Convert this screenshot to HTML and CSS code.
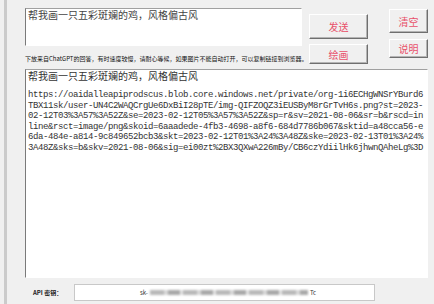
FILE: index.html
```html
<!DOCTYPE html>
<html lang="zh">

<head>
    <meta charset="UTF-8">
    <meta name="viewport" content="width=device-width, initial-scale=1.0">
    <title>ChatGPT 助手</title>
    <link rel="stylesheet" href="styles.css">
</head>

<body>
    <div class="window">
        <div class="edge"></div>
        <div class="main">
            <div class="top">
                <div class="prompt-col">
                    <div class="prompt">帮我画一只五彩斑斓的鸡，风格偏古风</div>
                    <p class="note">下放来自ChatGPT的回答，有时速度较慢，请耐心等候，如果图片不能自动打开，可以复制链接到浏览器。</p>
                </div>
                <div class="btn-col main-btns">
                    <button class="btn send">发送</button>
                    <button class="btn draw">绘画</button>
                </div>
                <div class="btn-col side-btns">
                    <button class="btn clear">清空</button>
                    <button class="btn help">说明</button>
                </div>
            </div>
            <div class="output">
                <div class="question">帮我画一只五彩斑斓的鸡，风格偏古风</div>
<pre class="answer">https://oaidalleapiprodscus.blob.core.windows.net/private/org-1i6ECHgWNSrYBurd6
TBX11sk/user-UN4C2WAQCrgUe6DxBiI28pTE/img-QIFZOQZ3iEUSByM8rGrTvH6s.png?st=2023-
02-12T03%3A57%3A52Z&amp;se=2023-02-12T05%3A57%3A52Z&amp;sp=r&amp;sv=2021-08-06&amp;sr=b&amp;rscd=in
line&amp;rsct=image/png&amp;skoid=6aaadede-4fb3-4698-a8f6-684d7786b067&amp;sktid=a48cca56-e
6da-484e-a814-9c849652bcb3&amp;skt=2023-02-12T01%3A24%3A48Z&amp;ske=2023-02-13T01%3A24%
3A48Z&amp;sks=b&amp;skv=2021-08-06&amp;sig=ei00zt%2BX3QXwA226mBy/CB6czYdiilHk6jhwnQAheLg%3D</pre>
            </div>
            <div class="key-row">
                <label class="key-label" for="apikey">API 密钥：</label>
                <div class="key-input" id="apikey">
                    <span>sk-</span><span class="masked"></span><span>Tc</span>
                </div>
            </div>
        </div>
    </div>
</body>

</html>
```

FILE: styles.css
```css
body {
    margin: 0;
    background-color: #f0f0f0;
    font-family: "Noto Sans CJK SC", "Liberation Sans", sans-serif;
    color: #222;
}

.window {
    display: flex;
    height: 304px;
    overflow: hidden;
}

.edge {
    width: 3px;
    margin-left: 4px;
    background-color: #cbcbcb;
}

.main {
    width: 403px;
    padding: 8px 0 0 18px;
}

.top {
    display: flex;
    align-items: flex-start;
    height: 56px;
}

.prompt-col {
    width: 277px;
}

.prompt {
    height: 38px;
    box-sizing: border-box;
    background-color: #fff;
    border: 1px solid;
    border-color: #a0a0a0 #fff #fff #7a7a7a;
    padding: 0 2px;
    font-size: 10px;
    line-height: 12px;
    color: #444;
}

.note {
    margin: 9px 0 0;
    font-size: 6px;
    line-height: 8px;
    white-space: nowrap;
    color: #111;
}

.btn-col {
    display: flex;
    flex-direction: column;
}

.main-btns {
    width: 59px;
    margin-left: 7px;
    padding-top: 6px;
    gap: 5px;
}

.side-btns {
    width: 39px;
    margin-left: 21px;
    padding-top: 1px;
    gap: 6px;
}

.btn {
    padding: 0;
    background-color: #f0f0f0;
    border: 1px solid;
    border-color: #fff #6f6f6f #6f6f6f #fff;
    box-shadow: inset -1px -1px #b4b4b4;
    font-family: "Noto Sans CJK SC", sans-serif;
    font-size: 10px;
    color: #e8506a;
}

.send {
    height: 25px;
}

.draw {
    height: 20px;
}

.clear {
    height: 24px;
}

.help {
    height: 19px;
}

.output {
    height: 209px;
    margin-top: 5px;
    box-sizing: border-box;
    background-color: #fff;
    border: 1px solid;
    border-color: #a0a0a0 #fff #fff #7a7a7a;
    padding: 1px 2px;
    color: #333;
}

.question {
    font-size: 10px;
    line-height: 10px;
}

.answer {
    margin: 9px 0 0;
    font-family: "Liberation Mono", monospace;
    font-size: 9px;
    letter-spacing: -0.4px;
    line-height: 10.5px;
}

.key-row {
    display: flex;
    align-items: center;
    margin-top: 6px;
}

.key-label {
    width: 41px;
    margin-left: 8px;
    font-size: 6px;
    font-weight: bold;
}

.key-input {
    width: 301px;
    height: 17px;
    box-sizing: border-box;
    display: flex;
    align-items: center;
    padding-left: 65px;
    background-color: #fff;
    border: 1px solid #c8c8c8;
    font-size: 6px;
    color: #333;
}

.masked {
    width: 158px;
    height: 5px;
    margin: 0 2px;
    background: repeating-linear-gradient(90deg, #b9b9b9 0 14px, #d8d8d8 14px 18px, #a9a9a9 18px 30px, #e4e4e4 30px 33px);
    filter: blur(1.2px);
}
```
